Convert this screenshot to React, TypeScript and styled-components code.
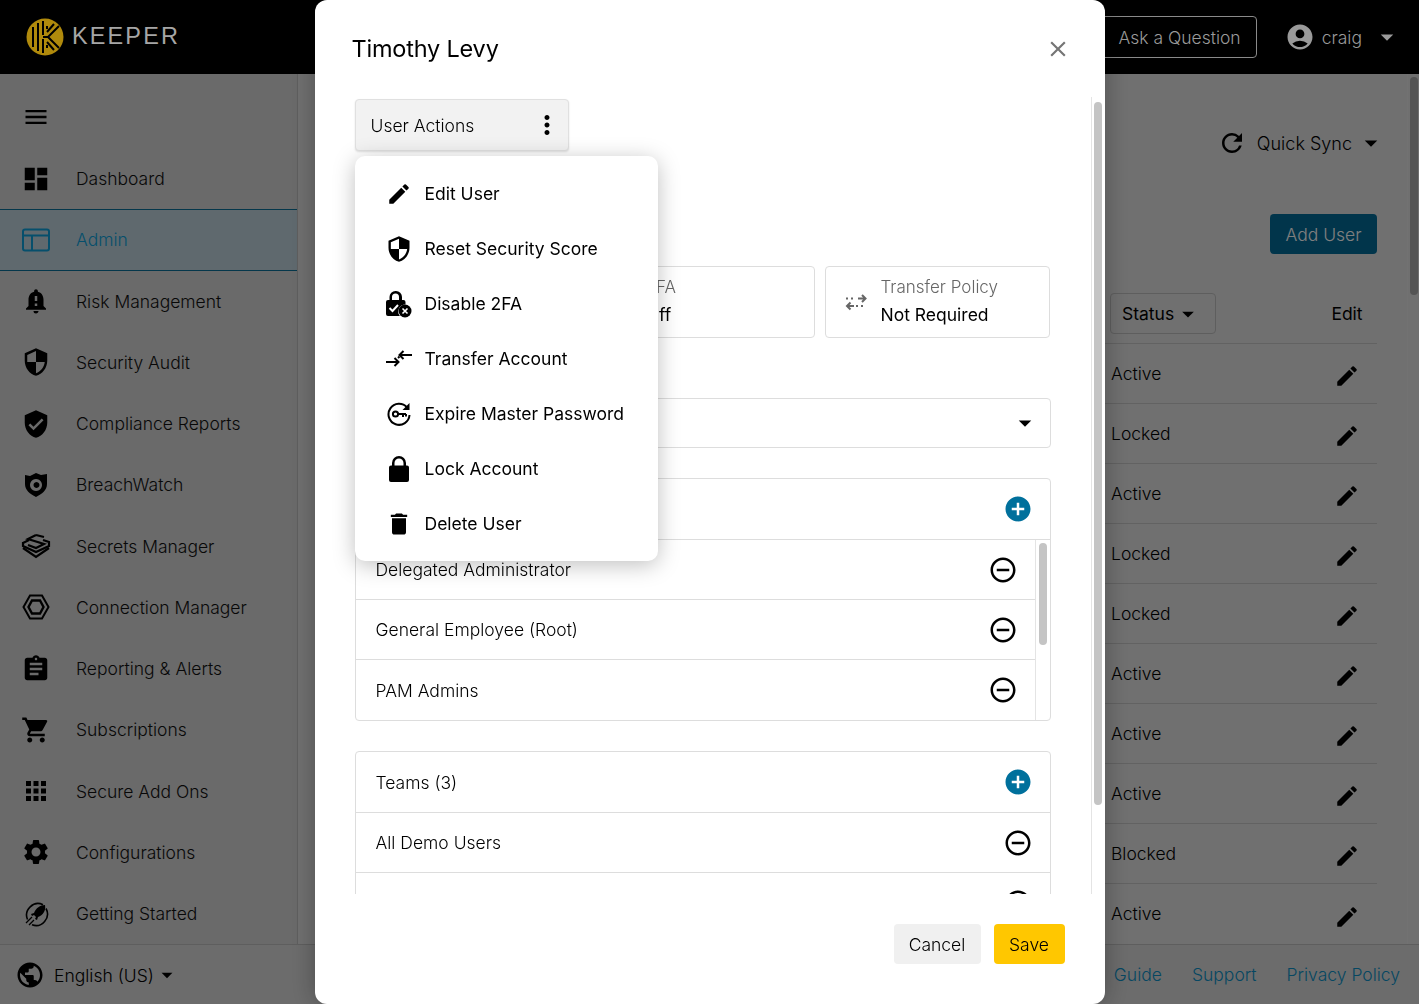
import React from 'react'
import styled, { createGlobalStyle } from 'styled-components'
import {
  MdAccountCircle,
  MdAddCircle,
  MdApps,
  MdArrowDropDown,
  MdAssignment,
  MdClose,
  MdDashboard,
  MdDelete,
  MdEdit,
  MdMenu,
  MdMoreVert,
  MdNotificationImportant,
  MdPublic,
  MdRefresh,
  MdRemoveCircleOutline,
  MdSecurity,
  MdSettings,
  MdShoppingCart,
  MdVerifiedUser,
} from 'react-icons/md'

const FONT = `Inter, "Noto Sans", sans-serif`

const GlobalStyle = createGlobalStyle`
  html, body {
    margin: 0;
    height: 100%;
    overflow: hidden;
    font-family: ${FONT};
    font-weight: 300;
    color: #000;
  }
  * { box-sizing: border-box; }
`

const Page = styled.div`
  width: 1419px;
  height: 1004px;
  display: flex;
  flex-direction: column;
  background: #e0e0e0;
`

const Header = styled.header`
  height: 74px;
  flex: none;
  background: #000;
  display: flex;
  align-items: center;
  padding: 0 17px 0 26px;
  color: #9a9a9a;
`

const Brand = styled.div`
  display: flex;
  align-items: center;
  gap: 8px;
  margin-right: auto;
  margin-top: -1px;
`

const Wordmark = styled.span`
  font-family: "Liberation Sans", sans-serif;
  font-weight: 400;
  font-size: 23px;
  letter-spacing: 2.1px;
  color: #a6a6a6;
  transform: scaleX(1.02);
  transform-origin: left;
`

const AskButton = styled.div`
  width: 180px;
  height: 42px;
  margin-top: 0;
  border: 1px solid #8a8a8a;
  border-radius: 4px;
  display: flex;
  align-items: center;
  justify-content: flex-end;
  padding-right: 15px;
  font-size: 17.5px;
`

const UserMenu = styled.div`
  display: flex;
  align-items: center;
  margin-left: 28px;
  font-size: 17.5px;
  svg:first-child { margin-right: 7px; }
  svg:last-child { margin-left: 10px; }
`

const Body = styled.div`
  flex: 1;
  min-height: 0;
  display: flex;
`

const Sidebar = styled.nav`
  width: 298px;
  flex: none;
  background: #d4d4d4;
  border-right: 1px solid #bdbdbd;
`

const MenuToggle = styled.div`
  height: 74px;
  padding: 29px 0 0 22px;
  svg { display: block; }
`

const NavItem = styled.div<{ $active?: boolean }>`
  height: 61.25px;
  display: flex;
  align-items: center;
  gap: 25px;
  padding-left: 21px;
  font-size: 17.5px;
  color: ${p => (p.$active ? '#0c9fd8' : '#111')};
  background: ${p => (p.$active ? '#bed2dc' : 'transparent')};
  border-top: ${p => (p.$active ? '1px solid #0a6f96' : '0')};
  border-bottom: ${p => (p.$active ? '1px solid #0a6f96' : '0')};
`

const NavIcon = styled.span`
  width: 30px;
  height: 30px;
  flex: none;
  display: flex;
  align-items: center;
  justify-content: center;
`

const Main = styled.main`
  flex: 1;
  min-width: 0;
  display: flex;
`

const MainContent = styled.div`
  flex: 1;
  min-width: 0;
  padding: 57px 30px 0 40px;
`

const SyncRow = styled.div`
  height: 24px;
  display: flex;
  align-items: center;
  justify-content: flex-end;
  margin-right: -9px;
  font-size: 18px;
  color: #000;
  gap: 0;
  span { margin: 0 4px 0 10px; }
`

const ToolRow = styled.div`
  display: flex;
  justify-content: flex-end;
  margin-top: 59px;
`

const AddUserButton = styled.div`
  width: 107px;
  height: 40px;
  border-radius: 4px;
  background: #026a96;
  color: #fff;
  font-size: 17.5px;
  display: flex;
  align-items: center;
  justify-content: center;
`

const TableHead = styled.div`
  margin-top: 39px;
  height: 51px;
  display: grid;
  grid-template-columns: 1fr 267px;
  border-bottom: 1px solid #c4c4c4;
`

const StatusFilter = styled.div`
  width: 106px;
  height: 41px;
  border: 1px solid #bdbdbd;
  border-radius: 4px;
  display: flex;
  align-items: center;
  padding-left: 11px;
  font-size: 17.5px;
  font-weight: 400;
`

const HeadCells = styled.div`
  display: flex;
  justify-content: space-between;
  span {
    width: 60px;
    padding-top: 10px;
    text-align: center;
    font-size: 17.5px;
    font-weight: 400;
  }
`

const TableRow = styled.div`
  height: 60px;
  display: grid;
  grid-template-columns: 1fr 266px;
  border-bottom: 1px solid #c4c4c4;
  &:last-child { border-bottom: 0; }
`

const RowCells = styled.div`
  display: flex;
  justify-content: space-between;
  align-items: center;
  font-size: 17.5px;
`

const StatusText = styled.span`
  margin-top: -1px;
`

const EditCell = styled.span`
  width: 60px;
  display: flex;
  justify-content: center;
  padding-top: 5px;
`

const Rail = styled.div<{ $width: number; $line?: boolean; $top: number }>`
  width: ${p => p.$width}px;
  flex: none;
  display: flex;
  justify-content: center;
  padding-top: ${p => p.$top}px;
  border-left: ${p => (p.$line ? '1px solid #e4e4e4' : '0')};
`

const Thumb = styled.div<{ $width: number; $height: number; $color: string }>`
  width: ${p => p.$width}px;
  height: ${p => p.$height}px;
  border-radius: 4px;
  background: ${p => p.$color};
`

const Footer = styled.footer`
  height: 60px;
  flex: none;
  display: flex;
  align-items: center;
  justify-content: space-between;
  padding: 0 19px 0 15px;
  background: #d8d8d8;
  border-top: 1px solid #bdbdbd;
`

const Language = styled.div`
  display: flex;
  align-items: center;
  font-size: 17.5px;
  margin-top: 1px;
  span { margin-left: 9px; }
`

const FooterLinks = styled.div`
  display: flex;
  gap: 30px;
  font-size: 17.5px;
  color: #0c8fc4;
`

const Scrim = styled.div`
  position: fixed;
  inset: 74px 0 0 0;
  background: rgba(0, 0, 0, 0.5);
`

const ModalLayer = styled.div`
  position: fixed;
  inset: 0;
  display: flex;
  justify-content: center;
`

const Modal = styled.div`
  width: 790px;
  height: 1004px;
  background: #fff;
  border-radius: 12px;
  box-shadow: 0 0 24px rgba(0, 0, 0, 0.3);
  display: flex;
  flex-direction: column;
`

const ModalHeader = styled.div`
  height: 97px;
  flex: none;
  display: flex;
  align-items: center;
  justify-content: space-between;
  padding: 0 34px 0 37px;
  svg { display: block; color: #757575; }
`

const ModalTitle = styled.h2`
  margin: 0;
  font-size: 23.5px;
  font-weight: 400;
  letter-spacing: -0.2px;
`

const ModalBody = styled.div`
  flex: 1;
  min-height: 0;
  display: flex;
  overflow: hidden;
`

const ModalScroll = styled.div`
  flex: 1;
  min-width: 0;
  padding: 2px 40px 0 40px;
`

const ActionAnchor = styled.div`
  position: relative;
  width: 214px;
`

const ActionButton = styled.div`
  height: 52px;
  display: flex;
  align-items: center;
  justify-content: space-between;
  padding: 0 6px 0 15px;
  background: #f2f2f2;
  border: 1px solid #e0e0e0;
  border-radius: 4px;
  box-shadow: 0 1px 2px rgba(0, 0, 0, 0.12);
  font-size: 17.5px;
`

const ActionMenu = styled.div`
  position: absolute;
  top: 57px;
  left: 0;
  z-index: 2;
  width: 303px;
  padding: 10px 0;
  background: #fff;
  border-radius: 10px;
  box-shadow: 0 4px 22px rgba(0, 0, 0, 0.25);
`

const ActionItem = styled.div`
  height: 55px;
  display: flex;
  align-items: center;
  gap: 12px;
  padding-left: 30px;
  font-size: 17.5px;
  font-weight: 400;
`

const ActionIcon = styled.span`
  width: 28px;
  height: 28px;
  flex: none;
  display: flex;
  align-items: center;
  justify-content: center;
`

const StatCards = styled.div`
  margin-top: 115px;
  display: grid;
  grid-template-columns: repeat(3, 225px);
  gap: 10px;
`

const StatCard = styled.div`
  height: 72px;
  border: 1px solid #ddd;
  border-radius: 4px;
  display: flex;
  align-items: center;
  padding-left: 18px;
  gap: 13px;
`

const StatIcon = styled.span`
  width: 24px;
  flex: none;
  display: flex;
  justify-content: center;
`

const StatLabel = styled.div`
  font-size: 17px;
  color: #666;
  line-height: 24px;
`

const StatValue = styled.div`
  font-size: 17.5px;
  font-weight: 400;
  line-height: 30px;
  margin-top: 1px;
`

const SelectBox = styled.div`
  margin-top: 60px;
  height: 50px;
  border: 1px solid #ddd;
  border-radius: 4px;
  display: flex;
  align-items: center;
  justify-content: flex-end;
  padding-right: 10px;
`

const ListCard = styled.section<{ $gap: number }>`
  margin-top: ${p => p.$gap}px;
  border: 1px solid #ddd;
  border-radius: 4px;
`

const ListHead = styled.div`
  height: 61px;
  display: flex;
  align-items: center;
  justify-content: space-between;
  padding: 0 17px 0 20px;
  border-bottom: 1px solid #ddd;
  font-size: 17.5px;
  svg { color: #00709c; }
`

const ListBody = styled.div`
  display: flex;
`

const ListRows = styled.div`
  flex: 1;
  min-width: 0;
`

const ListRow = styled.div`
  height: 60px;
  display: flex;
  align-items: center;
  justify-content: space-between;
  padding: 0 17px 0 20px;
  border-bottom: 1px solid #ddd;
  font-size: 17.5px;
  &:last-child { border-bottom: 0; }
`

const ModalFooter = styled.div`
  height: 110px;
  flex: none;
  display: flex;
  justify-content: flex-end;
  gap: 13px;
  padding: 30px 40px 0 0;
`

const FooterButton = styled.div<{ $primary?: boolean; $width: number }>`
  width: ${p => p.$width}px;
  height: 40px;
  border-radius: 4px;
  background: ${p => (p.$primary ? '#ffc700' : '#f0f0f0')};
  display: flex;
  align-items: center;
  justify-content: center;
  font-size: 17.5px;
`

function KeeperLogo() {
  return (
    <svg width="38" height="38" viewBox="0 0 38 38">
      <circle cx="19" cy="19" r="18.5" fill="#b08a0c" />
      <g stroke="#000" strokeWidth="2" fill="none">
        <path d="M7 9v20M12 5v28M17 3v14M17 21v14" />
        <path d="M17 19h5L33 8M22 19l11 11M21 14l7-8M21 24l7 8M21 8v3M21 27v3" />
      </g>
    </svg>
  )
}

function AdminIcon() {
  return (
    <svg width="28" height="24" viewBox="0 0 28 24" fill="none" stroke="currentColor" strokeWidth="2">
      <rect x="1" y="1.5" width="26" height="21" rx="2" />
      <path d="M1 7.5h26M10 7.5v15" />
    </svg>
  )
}

function BreachIcon() {
  return (
    <svg width="24" height="26" viewBox="0 0 24 26">
      <path
        fillRule="evenodd"
        d="M1 3l5 1 6-3 5 2 6-1v10c0 6-5 10-11 13C6 22 1 18 1 12zM12 7a6 6 0 1 0 .01 0zM12.5 10a3 3 0 1 1-.01 0z"
      />
      <circle cx="12.5" cy="13" r="1.6" />
      <path d="M17 8l3-2-1 5z" />
    </svg>
  )
}

function SecretsIcon() {
  return (
    <svg width="30" height="26" viewBox="0 0 30 26" fill="none" stroke="#000" strokeWidth="2.2">
      <path d="M15 2L7 6l16 5-8 4-8-3" />
      <path d="M23 4l-8-2M2 9v4l13 6 13-6V9l-6-2M8 7L2 10" />
      <path d="M2 15l13 9 13-9" />
    </svg>
  )
}

function ConnectionIcon() {
  return (
    <svg width="28" height="26" viewBox="0 0 28 26" fill="none" stroke="#000">
      <path strokeWidth="2" d="M8 1.5h12L26.5 13 20 24.5H8L1.500 13z" />
      <path strokeWidth="2.4" d="M10 6.500h8L21.500 13 18 19.500h-8L6.500 13z" />
    </svg>
  )
}

function RocketIcon() {
  return (
    <svg width="26" height="26" viewBox="0 0 26 26">
      <path
        fill="none"
        stroke="#000"
        strokeWidth="1.6"
        d="M4.500 18.500A11.500 11.500 0 0 1 20 3.700M23 7.500A11.500 11.500 0 0 1 9 23.800"
      />
      <path d="M22 4c-5 0-9 3-11 8l-3 1 1 2 2-1 2 2-1 2 2 1 1-3c5-2 8-6 7-12z" />
      <path fill="none" stroke="#000" strokeWidth="1.3" d="M3 22l6-6M6 24l5-5" />
    </svg>
  )
}

function DisableTwoFaIcon() {
  return (
    <svg width="27" height="28" viewBox="0 0 27 28">
      <path
        fillRule="evenodd"
        d="M10.500 1a6 6 0 0 0-6 6v3H3a2 2 0 0 0-2 2v12a2 2 0 0 0 2 2h12l-0.500-0.500a7 7 0 0 1 6-11V12a2 2 0 0 0-2-2h-1.500V7a6 6 0 0 0-6-6zM7 7a3.500 3.500 0 0 1 7 0v3H7z"
      />
      <path fill="none" stroke="#fff" strokeWidth="2" d="M4.500 18l3 3 5.500-6" />
      <circle cx="20" cy="21" r="6.500" />
      <path stroke="#fff" strokeWidth="1.600" d="M17.500 18.500l5 5M22.500 18.500l-5 5" />
    </svg>
  )
}

function TransferIcon() {
  return (
    <svg width="28" height="20" viewBox="0 0 28 20" fill="none" stroke="#000" strokeWidth="2">
      <path d="M1 13h12M9.500 9l4 4-4 4" />
      <path d="M27 6H15M18.500 2l-4 4 4 4" />
      <path d="M13 9l1.500-1.500" />
    </svg>
  )
}

function ExpireIcon() {
  return (
    <svg width="26" height="26" viewBox="0 0 26 26" fill="none" stroke="#000" strokeWidth="2">
      <path d="M21 6.500A10.500 10.500 0 1 0 23.500 14" />
      <path fill="#000" stroke="none" d="M23.500 2v7h-7z" />
      <circle cx="9.500" cy="13" r="2.600" />
      <path d="M12 13h8M17 13v3M20 13v2.500" />
    </svg>
  )
}

function LockIcon() {
  return (
    <svg width="22" height="28" viewBox="0 0 22 28">
      <path
        fillRule="evenodd"
        d="M11 1a7 7 0 0 0-7 7v2.500H3a2 2 0 0 0-2 2V25a2 2 0 0 0 2 2h16a2 2 0 0 0 2-2V12.500a2 2 0 0 0-2-2h-1V8a7 7 0 0 0-7-7zM6.500 10.500V8a4.500 4.500 0 0 1 9 0v2.500z"
      />
    </svg>
  )
}

function PolicyIcon() {
  return (
    <svg width="24" height="20" viewBox="0 0 24 20" fill="none" stroke="#666" strokeWidth="2">
      <path strokeDasharray="2 3" d="M2 6.500h10" />
      <path d="M14 6.500h7M18 3l3.500 3.500L18 10" />
      <path d="M3 14h7M6.500 10.500L3 14l3.500 3.500" />
      <path strokeDasharray="2 3" d="M12 14h10" />
    </svg>
  )
}

const NAV: { label: string; icon: React.ReactNode; active?: boolean }[] = [
  { label: 'Dashboard', icon: <MdDashboard size={30} color="#000" /> },
  { label: 'Admin', icon: <AdminIcon />, active: true },
  { label: 'Risk Management', icon: <MdNotificationImportant size={30} color="#000" /> },
  { label: 'Security Audit', icon: <MdSecurity size={30} color="#000" /> },
  { label: 'Compliance Reports', icon: <MdVerifiedUser size={30} color="#000" /> },
  { label: 'BreachWatch', icon: <BreachIcon /> },
  { label: 'Secrets Manager', icon: <SecretsIcon /> },
  { label: 'Connection Manager', icon: <ConnectionIcon /> },
  { label: 'Reporting & Alerts', icon: <MdAssignment size={30} color="#000" /> },
  { label: 'Subscriptions', icon: <MdShoppingCart size={30} color="#000" /> },
  { label: 'Secure Add Ons', icon: <MdApps size={32} color="#000" /> },
  { label: 'Configurations', icon: <MdSettings size={32} color="#000" /> },
  { label: 'Getting Started', icon: <RocketIcon /> },
]

const STATUSES = ['Active', 'Locked', 'Active', 'Locked', 'Locked', 'Active', 'Active', 'Active', 'Blocked', 'Active']

const ACTIONS: { label: string; icon: React.ReactNode }[] = [
  { label: 'Edit User', icon: <MdEdit size={26} /> },
  { label: 'Reset Security Score', icon: <MdSecurity size={30} /> },
  { label: 'Disable 2FA', icon: <DisableTwoFaIcon /> },
  { label: 'Transfer Account', icon: <TransferIcon /> },
  { label: 'Expire Master Password', icon: <ExpireIcon /> },
  { label: 'Lock Account', icon: <LockIcon /> },
  { label: 'Delete User', icon: <MdDelete size={30} /> },
]

export default function App() {
  return (
    <Page>
      <GlobalStyle />
      <Header>
        <Brand>
          <KeeperLogo />
          <Wordmark>KEEPER</Wordmark>
        </Brand>
        <AskButton>Ask a Question</AskButton>
        <UserMenu>
          <MdAccountCircle size={30} />
          craig
          <MdArrowDropDown size={30} />
        </UserMenu>
      </Header>

      <Body>
        <Sidebar>
          <MenuToggle>
            <MdMenu size={28} color="#000" />
          </MenuToggle>
          {NAV.map(item => (
            <NavItem key={item.label} $active={item.active}>
              <NavIcon>{item.icon}</NavIcon>
              {item.label}
            </NavItem>
          ))}
        </Sidebar>

        <Main>
          <MainContent>
            <SyncRow>
              <MdRefresh size={30} />
              <span>Quick Sync</span>
              <MdArrowDropDown size={30} />
            </SyncRow>
            <ToolRow>
              <AddUserButton>Add User</AddUserButton>
            </ToolRow>
            <TableHead>
              <span />
              <HeadCells>
                <StatusFilter>
                  Status
                  <MdArrowDropDown size={28} />
                </StatusFilter>
                <span>Edit</span>
              </HeadCells>
            </TableHead>
            {STATUSES.map((status, i) => (
              <TableRow key={i}>
                <span />
                <RowCells>
                  <StatusText>{status}</StatusText>
                  <EditCell>
                    <MdEdit size={26} />
                  </EditCell>
                </RowCells>
              </TableRow>
            ))}
          </MainContent>
          <Rail $width={12} $line $top={3}>
            <Thumb $width={8} $height={218} $color="#a8a8a8" />
          </Rail>
        </Main>
      </Body>

      <Footer>
        <Language>
          <MdPublic size={30} />
          <span>English (US)</span>
          <MdArrowDropDown size={26} />
        </Language>
        <FooterLinks>
          <span>Guide</span>
          <span>Support</span>
          <span>Privacy Policy</span>
        </FooterLinks>
      </Footer>

      <Scrim />

      <ModalLayer>
        <Modal>
          <ModalHeader>
            <ModalTitle>Timothy Levy</ModalTitle>
            <MdClose size={26} />
          </ModalHeader>
          <ModalBody>
            <ModalScroll>
              <ActionAnchor>
                <ActionButton>
                  User Actions
                  <MdMoreVert size={30} />
                </ActionButton>
                <ActionMenu>
                  {ACTIONS.map(action => (
                    <ActionItem key={action.label}>
                      <ActionIcon>{action.icon}</ActionIcon>
                      {action.label}
                    </ActionItem>
                  ))}
                </ActionMenu>
              </ActionAnchor>

              <StatCards>
                <StatCard />
                <StatCard>
                  <StatIcon />
                  <div>
                    <StatLabel>2FA</StatLabel>
                    <StatValue>Off</StatValue>
                  </div>
                </StatCard>
                <StatCard>
                  <StatIcon>
                    <PolicyIcon />
                  </StatIcon>
                  <div>
                    <StatLabel>Transfer Policy</StatLabel>
                    <StatValue>Not Required</StatValue>
                  </div>
                </StatCard>
              </StatCards>

              <SelectBox>
                <MdArrowDropDown size={30} />
              </SelectBox>

              <ListCard $gap={30}>
                <ListHead>
                  Roles (3)
                  <MdAddCircle size={30} />
                </ListHead>
                <ListBody>
                  <ListRows>
                    <ListRow>
                      Delegated Administrator
                      <MdRemoveCircleOutline size={30} />
                    </ListRow>
                    <ListRow>
                      General Employee (Root)
                      <MdRemoveCircleOutline size={30} />
                    </ListRow>
                    <ListRow>
                      PAM Admins
                      <MdRemoveCircleOutline size={30} />
                    </ListRow>
                  </ListRows>
                  <Rail $width={15} $line $top={3}>
                    <Thumb $width={8} $height={102} $color="#c4c4c4" />
                  </Rail>
                </ListBody>
              </ListCard>

              <ListCard $gap={30}>
                <ListHead>
                  Teams (3)
                  <MdAddCircle size={30} />
                </ListHead>
                <ListRow>
                  All Demo Users
                  <MdRemoveCircleOutline size={30} />
                </ListRow>
                <ListRow>
                  <span />
                  <MdRemoveCircleOutline size={30} />
                </ListRow>
              </ListCard>
            </ModalScroll>
            <Rail $width={14} $line $top={5}>
              <Thumb $width={8} $height={703} $color="#c4c4c4" />
            </Rail>
          </ModalBody>
          <ModalFooter>
            <FooterButton $width={87}>Cancel</FooterButton>
            <FooterButton $width={71} $primary>
              Save
            </FooterButton>
          </ModalFooter>
        </Modal>
      </ModalLayer>
    </Page>
  )
}
